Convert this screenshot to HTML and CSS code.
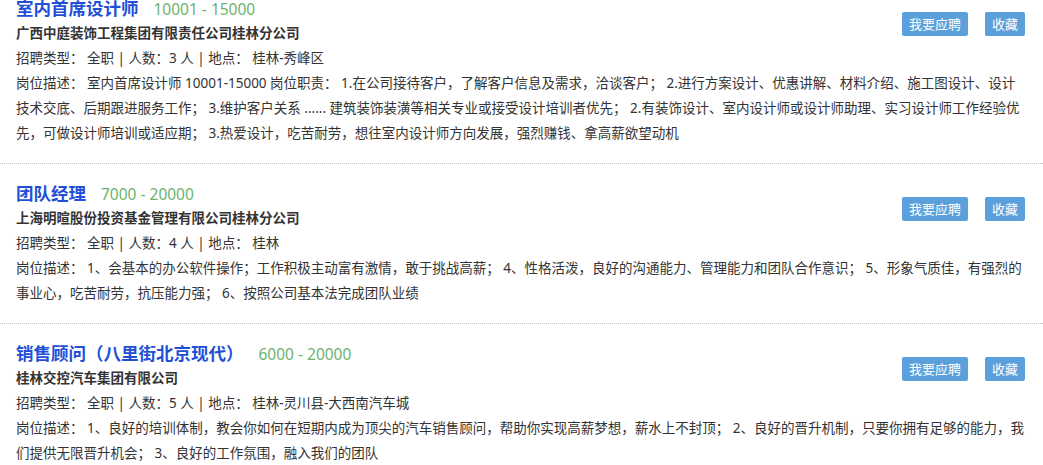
FILE: index.html
```html
<!DOCTYPE html>
<html lang="zh-CN">
<head>
<meta charset="utf-8">
<title>职位列表</title>
<link rel="stylesheet" href="styles.css">
</head>
<body>
<div class="job-list">
  <div class="job">
    <div class="job-head">
      <div class="job-info">
        <div class="job-title"><a class="job-name" href="#">室内首席设计师</a><span class="salary">10001 - 15000</span></div>
        <div class="company">广西中庭装饰工程集团有限责任公司桂林分公司</div>
        <div class="meta">招聘类型： 全职 | 人数：3 人 | 地点： 桂林-秀峰区</div>
      </div>
      <div class="actions"><button class="btn">我要应聘</button><button class="btn">收藏</button></div>
    </div>
    <p class="desc">岗位描述： 室内首席设计师 10001-15000 岗位职责： 1.在公司接待客户，了解客户信息及需求，洽谈客户； 2.进行方案设计、优惠讲解、材料介绍、施工图设计、设计技术交底、后期跟进服务工作； 3.维护客户关系 ...... 建筑装饰装潢等相关专业或接受设计培训者优先； 2.有装饰设计、室内设计师或设计师助理、实习设计师工作经验优先，可做设计师培训或适应期； 3.热爱设计，吃苦耐劳，想往室内设计师方向发展，强烈赚钱、拿高薪欲望动机</p>
  </div>
  <div class="job">
    <div class="job-head">
      <div class="job-info">
        <div class="job-title"><a class="job-name" href="#">团队经理</a><span class="salary">7000 - 20000</span></div>
        <div class="company">上海明暄股份投资基金管理有限公司桂林分公司</div>
        <div class="meta">招聘类型： 全职 | 人数：4 人 | 地点： 桂林</div>
      </div>
      <div class="actions"><button class="btn">我要应聘</button><button class="btn">收藏</button></div>
    </div>
    <p class="desc">岗位描述： 1、会基本的办公软件操作；工作积极主动富有激情，敢于挑战高薪； 4、性格活泼，良好的沟通能力、管理能力和团队合作意识； 5、形象气质佳，有强烈的事业心，吃苦耐劳，抗压能力强； 6、按照公司基本法完成团队业绩</p>
  </div>
  <div class="job">
    <div class="job-head">
      <div class="job-info">
        <div class="job-title"><a class="job-name" href="#">销售顾问（八里街北京现代）</a><span class="salary">6000 - 20000</span></div>
        <div class="company">桂林交控汽车集团有限公司</div>
        <div class="meta">招聘类型： 全职 | 人数：5 人 | 地点： 桂林-灵川县-大西南汽车城</div>
      </div>
      <div class="actions"><button class="btn">我要应聘</button><button class="btn">收藏</button></div>
    </div>
    <p class="desc">岗位描述： 1、良好的培训体制，教会你如何在短期内成为顶尖的汽车销售顾问，帮助你实现高薪梦想，薪水上不封顶； 2、良好的晋升机制，只要你拥有足够的能力，我们提供无限晋升机会； 3、良好的工作氛围，融入我们的团队</p>
  </div>
</div>
</body>
</html>
```
FILE: styles.css
```css
html, body {
  margin: 0;
  padding: 0;
  background: #fff;
}
body {
  font-family: "Noto Sans", "Noto Sans CJK SC", sans-serif;
  font-size: 13.5px;
  color: #333;
  overflow: hidden;
}
.job-list {
  margin-top: -21px;
}
.job {
  padding: 17px 18px 17px 16px;
  border-bottom: 1px dotted #c4c4c4;
}
.job-head {
  display: flex;
  justify-content: space-between;
  align-items: flex-start;
}
.job-info {
  min-width: 0;
}
.job-title {
  line-height: 25px;
  height: 25px;
  white-space: nowrap;
}
.job-name {
  font-size: 17.5px;
  font-weight: bold;
  color: #2150d6;
  text-decoration: none;
}
.salary {
  font-size: 15.5px;
  color: #6db36d;
  margin-left: 15px;
}
.company {
  line-height: 25px;
  font-weight: bold;
  color: #333;
}
.meta {
  line-height: 25px;
}
.actions {
  display: flex;
  gap: 17px;
  margin-top: 16px;
}
.btn {
  height: 24px;
  padding: 0 7px;
  border: none;
  border-radius: 2px;
  background: #5b9fdb;
  color: #fff;
  font-family: "Noto Sans CJK SC", sans-serif;
  font-size: 13px;
  line-height: 24px;
  cursor: pointer;
}
.desc {
  margin: 0;
  line-height: 25px;
}
```
